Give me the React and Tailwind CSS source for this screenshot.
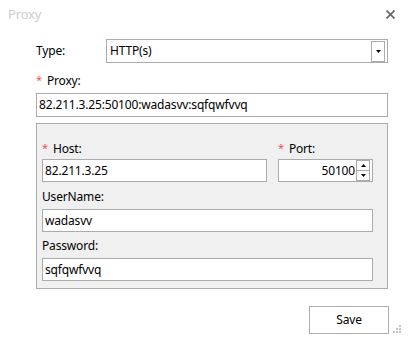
import React from "react";

function Input({ value, className = "", right = false }) {
  return (
    <div
      className={`h-[23px] border border-[#ababab] bg-white flex items-center px-[2px] ${right ? "justify-end" : ""} ${className}`}
    >
      <span className="leading-none">{value}</span>
    </div>
  );
}

function Req() {
  return <span className="text-[#ff4d4f] mr-[5px] text-[11px] relative top-[-1px]">*</span>;
}

export default function App() {
  return (
    <div className="w-[409px] h-[340px] bg-white relative text-[12px] tracking-[-0.17px] text-black font-['Noto_Sans','Liberation_Sans',sans-serif] select-none">
      {/* title bar */}
      <div className="h-[39px] flex justify-between items-start pl-[8px] pr-[14px] pt-[5px]">
        <span className="text-[13px] text-[#cdcdcd]">Proxy</span>
        <svg width="9" height="9" viewBox="0 0 9 9" className="mt-[5px]">
          <path d="M0.5 0.5 L8.5 8.5 M8.5 0.5 L0.5 8.5" stroke="#6a6a6a" strokeWidth="1.8" />
        </svg>
      </div>

      <div className="pl-[36px] pr-[21px]">
        {/* Type row */}
        <div className="flex items-center h-[24px]">
          <span className="w-[70px]">Type:</span>
          <div className="flex-1 h-[24px] border border-[#ababab] bg-white flex items-center pl-[3px] pr-[2px]">
            <span className="flex-1">HTTP(s)</span>
            <div className="w-[14px] h-[21px] border border-[#ababab] flex items-center justify-center">
              <svg width="5" height="3" viewBox="0 0 5 3">
                <path d="M0 0 H5 L2.5 3 Z" fill="#000" />
              </svg>
            </div>
          </div>
        </div>

        {/* Proxy label */}
        <div className="h-[30px] flex items-center pt-[6px]">
          <Req />
          <span>Proxy:</span>
        </div>
        <div className="h-[24px] border border-[#ababab] bg-white flex items-center px-[2px]">
          <span>82.211.3.25:50100:wadasvv:sqfqwfvvq</span>
        </div>

        {/* group */}
        <div className="mt-[6px] border border-[#ababab] bg-[#f0f0f0] pl-[5px] pr-[14px] pt-[15px] pb-[7px]">
          <div className="flex">
            <div className="w-[225px]">
              <div className="h-[20px] flex items-center">
                <Req />
                <span>Host:</span>
              </div>
              <Input value="82.211.3.25" />
            </div>
            <div className="ml-[11px] flex-1">
              <div className="h-[20px] flex items-center">
                <Req />
                <span>Port:</span>
              </div>
              <div className="h-[23px] border border-[#ababab] bg-white flex items-center pl-[2px] pr-[2px]">
                <span className="flex-1 text-right pr-[1px]">50100</span>
                <div className="flex flex-col w-[14px] h-[21px]">
                  <div className="flex-1 border border-[#ababab] flex items-center justify-center">
                    <svg width="5" height="3" viewBox="0 0 5 3">
                      <path d="M0 3 H5 L2.5 0 Z" fill="#000" />
                    </svg>
                  </div>
                  <div className="flex-1 border border-t-0 border-[#ababab] flex items-center justify-center">
                    <svg width="5" height="3" viewBox="0 0 5 3">
                      <path d="M0 0 H5 L2.5 3 Z" fill="#000" />
                    </svg>
                  </div>
                </div>
              </div>
            </div>
          </div>
          <div className="h-[27px] flex items-center pt-[3px]">UserName:</div>
          <Input value="wadasvv" />
          <div className="h-[26px] flex items-center pt-[1px]">Password:</div>
          <Input value="sqfqwfvvq" />
        </div>

        {/* footer */}
        <div className="flex justify-end mt-[17px]">
          <button className="w-[80px] h-[28px] border border-[#adadad] bg-white text-[12px] mr-[-1px]">
            Save
          </button>
        </div>
      </div>

      {/* grip */}
      <svg width="8" height="8" viewBox="0 0 8 8" className="absolute right-[8px] bottom-[7px]">
        <rect x="6" y="0" width="2" height="2" fill="#c3c3c3" />
        <rect x="3" y="3" width="2" height="2" fill="#c3c3c3" />
        <rect x="6" y="3" width="2" height="2" fill="#c3c3c3" />
        <rect x="0" y="6" width="2" height="2" fill="#c3c3c3" />
        <rect x="3" y="6" width="2" height="2" fill="#c3c3c3" />
        <rect x="6" y="6" width="2" height="2" fill="#c3c3c3" />
      </svg>
    </div>
  );
}
